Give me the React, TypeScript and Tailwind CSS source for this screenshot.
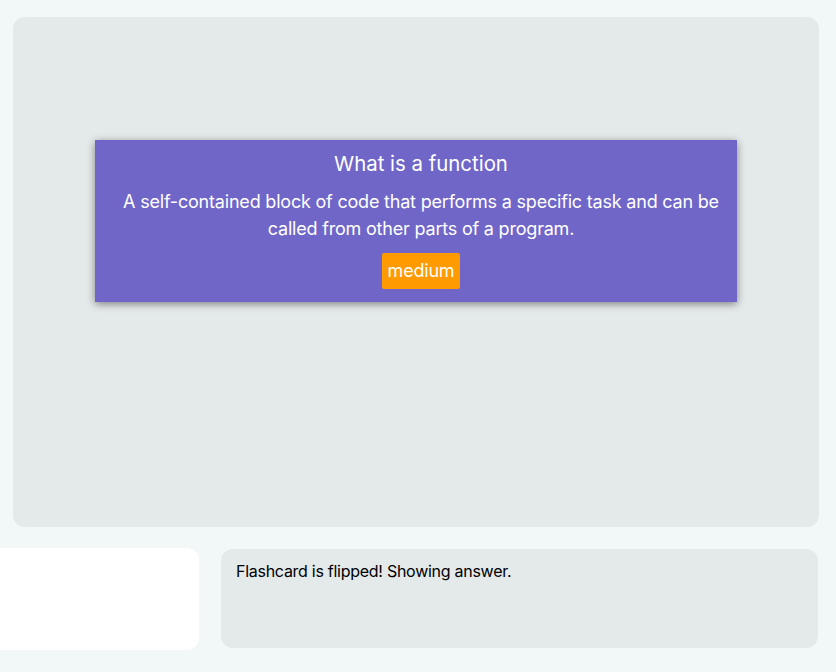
import React from "react";

export default function App() {
  return (
    <div className="min-h-[672px] bg-[#f2f7f7] pt-[17px] font-['Inter','Noto_Sans',sans-serif]">
      {/* Card stage */}
      <div className="ml-[13px] h-[510px] w-[806px] rounded-xl bg-[#e4e9e9] pt-[123px]">
        <div className="mx-auto flex w-[642px] flex-col items-center bg-[#7066c8] pb-[13px] pl-[26px] pr-[16px] pt-[10px] text-center text-white shadow-[0_2px_8px_rgba(0,0,0,0.45)]">
          <h2 className="text-[20.4px] leading-[28px]">What is a function</h2>
          <p className="mt-[10px] text-[18px] leading-[27px] tracking-[-0.2px]">
            A self-contained block of code that performs a specific task and can be called from other
            parts of a program.
          </p>
          <span className="mt-[11px] rounded-[2px] bg-[#ff9a00] px-[6px] text-[18px] leading-[36px] tracking-[-0.2px]">
            medium
          </span>
        </div>
      </div>

      {/* Bottom row */}
      <div className="mt-[21px] flex items-start gap-[22px]">
        <div className="h-[102px] w-[199px] rounded-r-xl bg-white" />
        <div className="mt-px h-[99px] w-[597px] rounded-xl bg-[#e4e9e9] px-[15px] pt-[10px] text-[16px] leading-6 tracking-[-0.27px] text-black">
          Flashcard is flipped! Showing answer.
        </div>
      </div>
    </div>
  );
}
